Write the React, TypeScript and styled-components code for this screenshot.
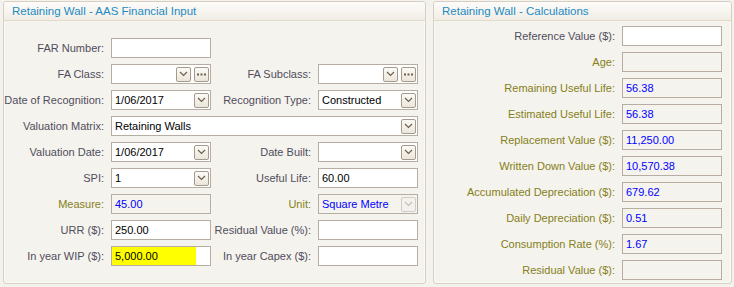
import React from "react";
import styled, { createGlobalStyle, css } from "styled-components";

const GlobalStyle = createGlobalStyle`
  html, body { margin: 0; padding: 0; background: #f4f2ed; }
  body { font-family: "Liberation Sans", Arial, sans-serif; font-size: 11px; }
`;

const Page = styled.div`
  display: flex;
  gap: 7px;
  padding: 1px 0 0 3px;
  width: 734px;
  height: 287px;
  box-sizing: border-box;
`;

const Panel = styled.section<{ $width: number }>`
  width: ${(p) => p.$width}px;
  height: 283px;
  box-sizing: border-box;
  border: 1px solid #d7d0c2;
  border-radius: 3px;
  background: #f5f3ee;
  display: flex;
  flex-direction: column;
  box-shadow: inset 0 0 0 1px #fbfaf7;
`;

const PanelHeader = styled.header`
  height: 19px;
  box-sizing: border-box;
  border-bottom: 1px solid #e2dbcb;
  background: linear-gradient(#fdfcfa, #f1ede5);
  color: #1d8ac2;
  font-size: 11.5px;
  line-height: 19px;
  padding-left: 8px;
  border-radius: 2px 2px 0 0;
`;

const FormGrid = styled.div<{ $cols: string; $padTop: number }>`
  display: grid;
  grid-template-columns: ${(p) => p.$cols};
  grid-auto-rows: 20px;
  row-gap: 6px;
  padding-top: ${(p) => p.$padTop}px;
`;

const Label = styled.label<{ $olive?: boolean }>`
  display: flex;
  align-items: center;
  justify-content: flex-end;
  padding-right: 7px;
  color: ${(p) => (p.$olive ? "#858019" : "#504d5c")};
  white-space: nowrap;
`;

const Field = styled.div<{ $readOnly?: boolean; $highlight?: boolean; $span?: number }>`
  display: flex;
  align-items: center;
  gap: 3px;
  height: 20px;
  box-sizing: border-box;
  border: 1px solid #b8ada2;
  background: ${(p) => (p.$readOnly ? "#f5f3ee" : "#ffffff")};
  ${(p) =>
    p.$highlight &&
    css`
      background: linear-gradient(to right, #ffff00 0, #ffff00 84px, #ffffff 84px);
    `}
  ${(p) =>
    p.$span &&
    css`
      grid-column: span ${p.$span};
    `}
  padding-right: 1px;
`;

const FieldText = styled.span<{ $blue?: boolean }>`
  flex: 1;
  padding-left: 3px;
  color: ${(p) => (p.$blue ? "#0000ff" : "#000000")};
  white-space: nowrap;
  overflow: hidden;
`;

const SmallButton = styled.span<{ $disabled?: boolean }>`
  width: 15px;
  height: 15px;
  box-sizing: border-box;
  border: 1px solid ${(p) => (p.$disabled ? "#d2ccc4" : "#a69a8c")};
  border-radius: 2px;
  background: ${(p) =>
    p.$disabled ? "#f3f1ed" : "linear-gradient(#fbfaf6, #ebe6db)"};
  display: flex;
  align-items: center;
  justify-content: center;
  color: ${(p) => (p.$disabled ? "#c4beb6" : "#6e5f4e")};
  flex: none;
`;

const Chevron = () => (
  <svg width="9" height="6" viewBox="0 0 9 6">
    <path d="M1 1 L4.5 4.5 L8 1" fill="none" stroke="currentColor" strokeWidth="1.2" />
  </svg>
);

const Dots = () => (
  <svg width="9" height="3" viewBox="0 0 9 3">
    <rect x="0" y="0.5" width="2" height="2" fill="currentColor" />
    <rect x="3.5" y="0.5" width="2" height="2" fill="currentColor" />
    <rect x="7" y="0.5" width="2" height="2" fill="currentColor" />
  </svg>
);

type FieldProps = {
  value?: string;
  blue?: boolean;
  readOnly?: boolean;
  highlight?: boolean;
  span?: number;
  dropdown?: boolean;
  disabledDrop?: boolean;
  ellipsis?: boolean;
};

const Input = ({ value, blue, readOnly, highlight, span, dropdown, disabledDrop, ellipsis }: FieldProps) => (
  <Field $readOnly={readOnly} $highlight={highlight} $span={span}>
    <FieldText $blue={blue}>{value}</FieldText>
    {dropdown && (
      <SmallButton $disabled={disabledDrop}>
        <Chevron />
      </SmallButton>
    )}
    {ellipsis && (
      <SmallButton>
        <Dots />
      </SmallButton>
    )}
  </Field>
);

const calcRows: { label: string; value?: string; olive: boolean; readOnly: boolean }[] = [
  { label: "Reference Value ($):", olive: false, readOnly: false },
  { label: "Age:", olive: true, readOnly: true },
  { label: "Remaining Useful Life:", value: "56.38", olive: true, readOnly: true },
  { label: "Estimated Useful Life:", value: "56.38", olive: true, readOnly: true },
  { label: "Replacement Value ($):", value: "11,250.00", olive: true, readOnly: true },
  { label: "Written Down Value ($):", value: "10,570.38", olive: true, readOnly: true },
  { label: "Accumulated Depreciation ($):", value: "679.62", olive: true, readOnly: true },
  { label: "Daily Depreciation ($):", value: "0.51", olive: true, readOnly: true },
  { label: "Consumption Rate (%):", value: "1.67", olive: true, readOnly: true },
  { label: "Residual Value ($):", olive: true, readOnly: true },
];

export default function App() {
  return (
    <>
      <GlobalStyle />
      <Page>
        <Panel $width={423}>
          <PanelHeader>Retaining Wall - AAS Financial Input</PanelHeader>
          <FormGrid $cols="107px 100px 107px 100px" $padTop={17}>
            <Label>FAR Number:</Label>
            <Input />
            <span />
            <span />

            <Label>FA Class:</Label>
            <Input dropdown ellipsis />
            <Label>FA Subclass:</Label>
            <Input dropdown ellipsis />

            <Label>Date of Recognition:</Label>
            <Input value="1/06/2017" dropdown />
            <Label>Recognition Type:</Label>
            <Input value="Constructed" dropdown />

            <Label>Valuation Matrix:</Label>
            <Input value="Retaining Walls" dropdown span={3} />

            <Label>Valuation Date:</Label>
            <Input value="1/06/2017" dropdown />
            <Label>Date Built:</Label>
            <Input dropdown />

            <Label>SPI:</Label>
            <Input value="1" dropdown />
            <Label>Useful Life:</Label>
            <Input value="60.00" />

            <Label $olive>Measure:</Label>
            <Input value="45.00" blue readOnly />
            <Label $olive>Unit:</Label>
            <Input value="Square Metre" blue readOnly dropdown disabledDrop />

            <Label>URR ($):</Label>
            <Input value="250.00" />
            <Label>Residual Value (%):</Label>
            <Input />

            <Label>In year WIP ($):</Label>
            <Input value="5,000.00" highlight />
            <Label>In year Capex ($):</Label>
            <Input />
          </FormGrid>
        </Panel>
        <Panel $width={299}>
          <PanelHeader>Retaining Wall - Calculations</PanelHeader>
          <FormGrid $cols="188px 100px" $padTop={5}>
            {calcRows.map((r) => (
              <React.Fragment key={r.label}>
                <Label $olive={r.olive}>{r.label}</Label>
                <Input value={r.value} blue readOnly={r.readOnly} />
              </React.Fragment>
            ))}
          </FormGrid>
        </Panel>
      </Page>
    </>
  );
}
